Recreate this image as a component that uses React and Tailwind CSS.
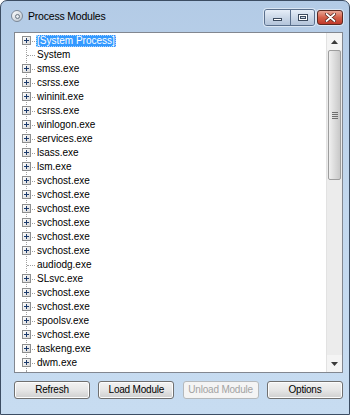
import React from 'react';

const processes = [
    { name: '[System Process]', kids: true },
    { name: 'System', kids: false },
    { name: 'smss.exe', kids: true },
    { name: 'csrss.exe', kids: true },
    { name: 'wininit.exe', kids: true },
    { name: 'csrss.exe', kids: true },
    { name: 'winlogon.exe', kids: true },
    { name: 'services.exe', kids: true },
    { name: 'lsass.exe', kids: true },
    { name: 'lsm.exe', kids: true },
    { name: 'svchost.exe', kids: true },
    { name: 'svchost.exe', kids: true },
    { name: 'svchost.exe', kids: true },
    { name: 'svchost.exe', kids: true },
    { name: 'svchost.exe', kids: true },
    { name: 'svchost.exe', kids: true },
    { name: 'audiodg.exe', kids: false },
    { name: 'SLsvc.exe', kids: true },
    { name: 'svchost.exe', kids: true },
    { name: 'svchost.exe', kids: true },
    { name: 'spoolsv.exe', kids: true },
    { name: 'svchost.exe', kids: true },
    { name: 'taskeng.exe', kids: true },
    { name: 'dwm.exe', kids: true },
];

const font = { fontFamily: '"Liberation Sans", Arial, sans-serif' };

const PlusBox = () => (
    <div className="absolute left-0 top-[2px] w-[9px] h-[9px] border border-[#8e8f8f] bg-gradient-to-br from-white to-[#d8d8d8] flex items-center justify-center">
        <svg width="5" height="5" viewBox="0 0 5 5">
            <rect x="0" y="2" width="5" height="1" fill="#1b3a6b" />
            <rect x="2" y="0" width="1" height="5" fill="#1b3a6b" />
        </svg>
    </div>
);

const TreeRow = ({ item, index }) => {
    const selected = index === 0;
    return (
        <div className="flex h-[14px] items-center">
            <div className="relative h-full w-[13px] shrink-0">
                <div className={index === 0 ? 'absolute left-[4px] top-[7px] -bottom-px border-l border-dotted border-[#a0a0a0]' : 'absolute left-[4px] top-0 -bottom-px border-l border-dotted border-[#a0a0a0]'} />
                <div className="absolute left-[5px] right-0 top-[7px] border-t border-dotted border-[#a0a0a0]" />
                {item.kids && <PlusBox />}
            </div>
            <span
                className={selected
                    ? 'ml-px px-px leading-[12px] text-[10px] text-white bg-[#3399ff] outline outline-1 outline-dotted outline-[#a8d0ff] -outline-offset-1'
                    : 'ml-px px-px leading-[12px] text-[10px] text-black'}
            >
                {item.name}
            </span>
        </div>
    );
};

const Scrollbar = () => (
    <div className="w-[16px] h-full flex flex-col bg-[#ececec] border-l border-[#e2e2e2]">
        {/* up arrow */}
        <div className="h-[17px] flex items-center justify-center bg-[#f4f4f4]">
            <svg width="7" height="4" viewBox="0 0 7 4"><path d="M0 4 L3.5 0 L7 4 Z" fill="#3a3a3a" /></svg>
        </div>
        {/* thumb */}
        <div className="mx-px h-[130px] rounded-[2px] border border-[#9d9d9d] bg-gradient-to-r from-[#f0f0f0] via-[#dcdcdc] to-[#c9c9c9] flex items-center justify-center">
            <div className="flex flex-col gap-px">
                <div className="w-[6px] h-px bg-[#6f6f6f]" />
                <div className="w-[6px] h-px bg-[#6f6f6f]" />
                <div className="w-[6px] h-px bg-[#6f6f6f]" />
                <div className="w-[6px] h-px bg-[#6f6f6f]" />
            </div>
        </div>
        <div className="flex-1" />
        {/* down arrow */}
        <div className="h-[17px] flex items-center justify-center bg-[#f4f4f4]">
            <svg width="7" height="4" viewBox="0 0 7 4"><path d="M0 0 L7 0 L3.5 4 Z" fill="#3a3a3a" /></svg>
        </div>
    </div>
);

const DlgButton = ({ label, disabled }) => (
    <button
        className={disabled
            ? 'w-[76px] h-[18px] rounded-[3px] border border-[#b5b9bc] bg-[#f4f4f4] text-[10px] leading-none tracking-[-0.2px] text-[#a3a3a3]'
            : 'w-[76px] h-[18px] rounded-[3px] border border-[#707070] bg-gradient-to-b from-[#f3f3f3] via-[#e6e6e6] to-[#cfcfcf] text-[10px] leading-none tracking-[-0.2px] text-black shadow-[inset_0_0_0_1px_#fcfcfc]'}
        style={font}
    >
        {label}
    </button>
);

const CaptionButtons = () => (
    <div className="flex items-center gap-[2px] mt-[8px]">
        <div className="flex rounded-[3px] border border-[#5a6f8c] overflow-hidden shadow-[0_0_0_1px_rgba(255,255,255,0.5)]">
            <div className="w-[26px] h-[15px] bg-gradient-to-b from-[#e6eef8] via-[#cbd8e8] to-[#b3c4da] flex items-end justify-center pb-[4px] border-r border-[#5a6f8c]">
                <div className="w-[9px] h-[3px] bg-white border border-[#3b4a5e]" />
            </div>
            <div className="w-[23px] h-[15px] bg-gradient-to-b from-[#e6eef8] via-[#cbd8e8] to-[#b3c4da] flex items-center justify-center">
                <div className="w-[10px] h-[7px] border border-[#3b4a5e] bg-white flex items-center justify-center">
                    <div className="w-[6px] h-[3px] border border-[#3b4a5e] bg-[#c9d6e6]" />
                </div>
            </div>
        </div>
        <div className="w-[26px] h-[15px] rounded-[3px] border border-[#5b2a22] bg-gradient-to-b from-[#e8a595] via-[#d4604a] to-[#c0392a] flex items-center justify-center shadow-[0_0_0_1px_rgba(255,255,255,0.5)]">
            <svg width="11" height="9" viewBox="0 0 11 9">
                <path d="M1.5 1 L9.5 8 M9.5 1 L1.5 8" stroke="#4a1a14" strokeWidth="3.2" strokeLinecap="round" />
                <path d="M1.5 1 L9.5 8 M9.5 1 L1.5 8" stroke="#ffffff" strokeWidth="1.8" strokeLinecap="round" />
            </svg>
        </div>
    </div>
);

const App = () => {
    return (
        <div className="w-[350px] h-[415px] overflow-hidden bg-white" style={font}>
            <div className="w-full h-full rounded-t-[7px] border border-[#3c4d63] bg-gradient-to-b from-[#b3cbe6] via-[#c3d8ee] to-[#c7dcf1] flex flex-col">
                {/* Title bar */}
                <div className="h-[30px] flex items-start pl-[10px] pr-[6px]">
                    <div className="mt-[9px] w-[12px] h-[12px] rounded-full border border-[#7b8796] bg-gradient-to-br from-white to-[#b9c2cc] flex items-center justify-center">
                        <div className="w-[5px] h-[5px] rounded-full border border-[#6a7582] bg-[#e6eaef]" />
                    </div>
                    <span className="ml-[5px] mt-[8px] text-[10.5px] tracking-[-0.2px] text-black leading-[14px]">Process Modules</span>
                    <div className="flex-1" />
                    <CaptionButtons />
                </div>

                {/* Client area */}
                <div className="flex-1 flex flex-col pl-[13px] pr-[6px]">
                    <div className="mt-px h-[341px] border border-[#828790] bg-white flex">
                        <div className="flex-1 overflow-hidden pl-[7px] pt-[1px] flex flex-col">
                            {processes.map((p, i) => (
                                <TreeRow key={i} item={p} index={i} />
                            ))}
                            {/* tree line continues past the visible rows */}
                            <div className="flex-1 relative">
                                <div className="absolute left-[4px] top-0 bottom-0 border-l border-dotted border-[#a0a0a0]" />
                            </div>
                        </div>
                        <Scrollbar />
                    </div>
                    <div className="mt-[8px] flex justify-between">
                        <DlgButton label="Refresh" />
                        <DlgButton label="Load Module" />
                        <DlgButton label="Unload Module" disabled />
                        <DlgButton label="Options" />
                    </div>
                </div>
            </div>
        </div>
    );
};

export default App;
